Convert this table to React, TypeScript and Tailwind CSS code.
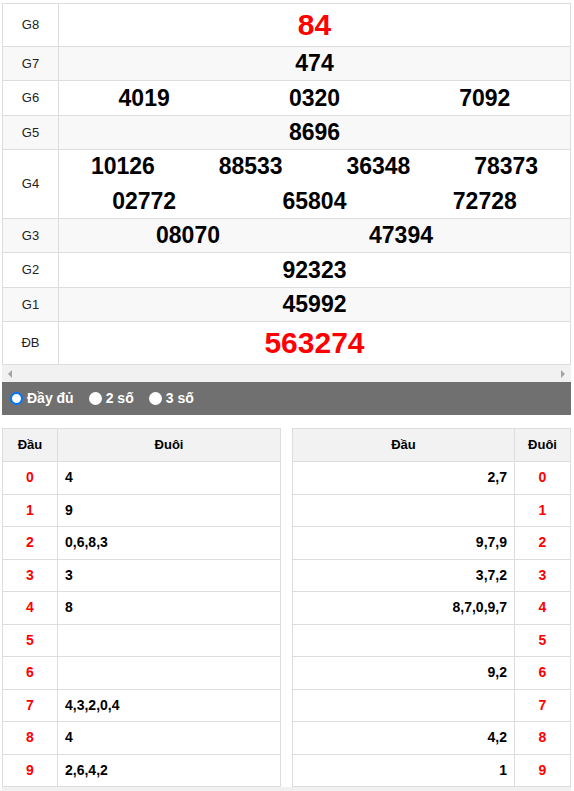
import React from 'react';

type Prize = { label: string; rows: string[][]; h: string; big?: boolean; alt: boolean };

const prizes: Prize[] = [
  { label: 'G8', rows: [['84']], h: 'h-[43px]', big: true, alt: false },
  { label: 'G7', rows: [['474']], h: 'h-[34px]', alt: true },
  { label: 'G6', rows: [['4019', '0320', '7092']], h: 'h-[35px]', alt: false },
  { label: 'G5', rows: [['8696']], h: 'h-[34px]', alt: true },
  { label: 'G4', rows: [['10126', '88533', '36348', '78373'], ['02772', '65804', '72728']], h: 'h-[69px]', alt: false },
  { label: 'G3', rows: [['08070', '47394']], h: 'h-[34px]', alt: true },
  { label: 'G2', rows: [['92323']], h: 'h-[35px]', alt: false },
  { label: 'G1', rows: [['45992']], h: 'h-[34px]', alt: true },
  { label: 'ĐB', rows: [['563274']], h: 'h-[43px]', big: true, alt: false },
];

const dauRows = ['4', '9', '0,6,8,3', '3', '8', '', '', '4,3,2,0,4', '4', '2,6,4,2'];
const duoiRows = ['2,7', '', '9,7,9', '3,7,2', '8,7,0,9,7', '', '9,2', '', '4,2', '1'];

const font = { fontFamily: '"Liberation Sans", Arial, sans-serif' };

function PrizeCell({ p }: { p: Prize }) {
  if (p.big) {
    return (
      <div className="text-center font-bold text-[#ff0000] leading-none text-[30px]">
        {p.rows[0][0]}
      </div>
    );
  }
  if (p.label === 'G3') {
    return (
      <div className="flex pl-[44px] gap-[43px] text-[23px] font-bold leading-none">
        {p.rows[0].map(n => (
          <span key={n} className="w-[170px] text-center">{n}</span>
        ))}
      </div>
    );
  }
  return (
    <div className="flex flex-col gap-[12px]">
      {p.rows.map((r, i) => (
        <div key={i} className="flex text-[23px] font-bold leading-none">
          {r.map(n => (
            <span key={n} className="flex-1 text-center">{n}</span>
          ))}
        </div>
      ))}
    </div>
  );
}

function Radio({ checked, label }: { checked?: boolean; label: string }) {
  return (
    <label className="flex items-center gap-[4px] mr-[15px]">
      <span
        className={`w-[13px] h-[13px] rounded-full bg-white ${checked ? 'border-[2px] border-[#0075ff]' : ''}`}
      />
      <span className="text-white font-bold text-[14px]">{label}</span>
    </label>
  );
}

export default function App() {
  return (
    <div className="bg-white w-[574px] text-black" style={font}>
      <div className="ml-[2px] w-[569px] pt-[3px]">
        <table className="w-full border-collapse">
          <tbody>
            {prizes.map(p => (
              <tr key={p.label} className={`${p.h} ${p.alt ? 'bg-[#f8f8f8]' : 'bg-white'}`}>
                <td className="w-[56px] border border-[#dddddd] text-center text-[13px] text-[#222]">{p.label}</td>
                <td className="border border-[#dddddd] p-0">
                  <PrizeCell p={p} />
                </td>
              </tr>
            ))}
          </tbody>
        </table>
        <div className="h-[17px] bg-[#f1f1f1] flex items-center justify-between px-[6px]">
          <span className="w-0 h-0 border-y-[4px] border-y-transparent border-r-[4px] border-r-[#a3a3a3]" />
          <span className="w-0 h-0 border-y-[4px] border-y-transparent border-l-[4px] border-l-[#a3a3a3]" />
        </div>
        <div className="h-[33px] bg-[#707070] flex items-center pl-[8px]">
          <Radio checked label="Đầy đủ" />
          <Radio label="2 số" />
          <Radio label="3 số" />
        </div>

        <div className="flex justify-between mt-[13px]">
          <table className="w-[279px] border-collapse text-[14px] font-bold">
            <thead>
              <tr className="h-[33px] bg-[#f2f2f2] text-[13px]">
                <th className="w-[55px] border border-[#dddddd] font-bold">Đầu</th>
                <th className="border border-[#dddddd] font-bold">Đuôi</th>
              </tr>
            </thead>
            <tbody>
              {dauRows.map((v, i) => (
                <tr key={i} className="h-[32.5px]">
                  <td className="border border-[#dddddd] text-center text-[#ff0000]">{i}</td>
                  <td className="border border-[#dddddd] pl-[7px]">{v}</td>
                </tr>
              ))}
            </tbody>
          </table>
          <table className="w-[279px] border-collapse text-[14px] font-bold">
            <thead>
              <tr className="h-[33px] bg-[#f2f2f2] text-[13px]">
                <th className="border border-[#dddddd] font-bold">Đầu</th>
                <th className="w-[56px] border border-[#dddddd] font-bold">Đuôi</th>
              </tr>
            </thead>
            <tbody>
              {duoiRows.map((v, i) => (
                <tr key={i} className="h-[32.5px]">
                  <td className="border border-[#dddddd] text-right pr-[7px]">{v}</td>
                  <td className="border border-[#dddddd] text-center text-[#ff0000]">{i}</td>
                </tr>
              ))}
            </tbody>
          </table>
        </div>
        <div className="h-[10px] bg-[#f1f1f1]" />
      </div>
    </div>
  );
}
